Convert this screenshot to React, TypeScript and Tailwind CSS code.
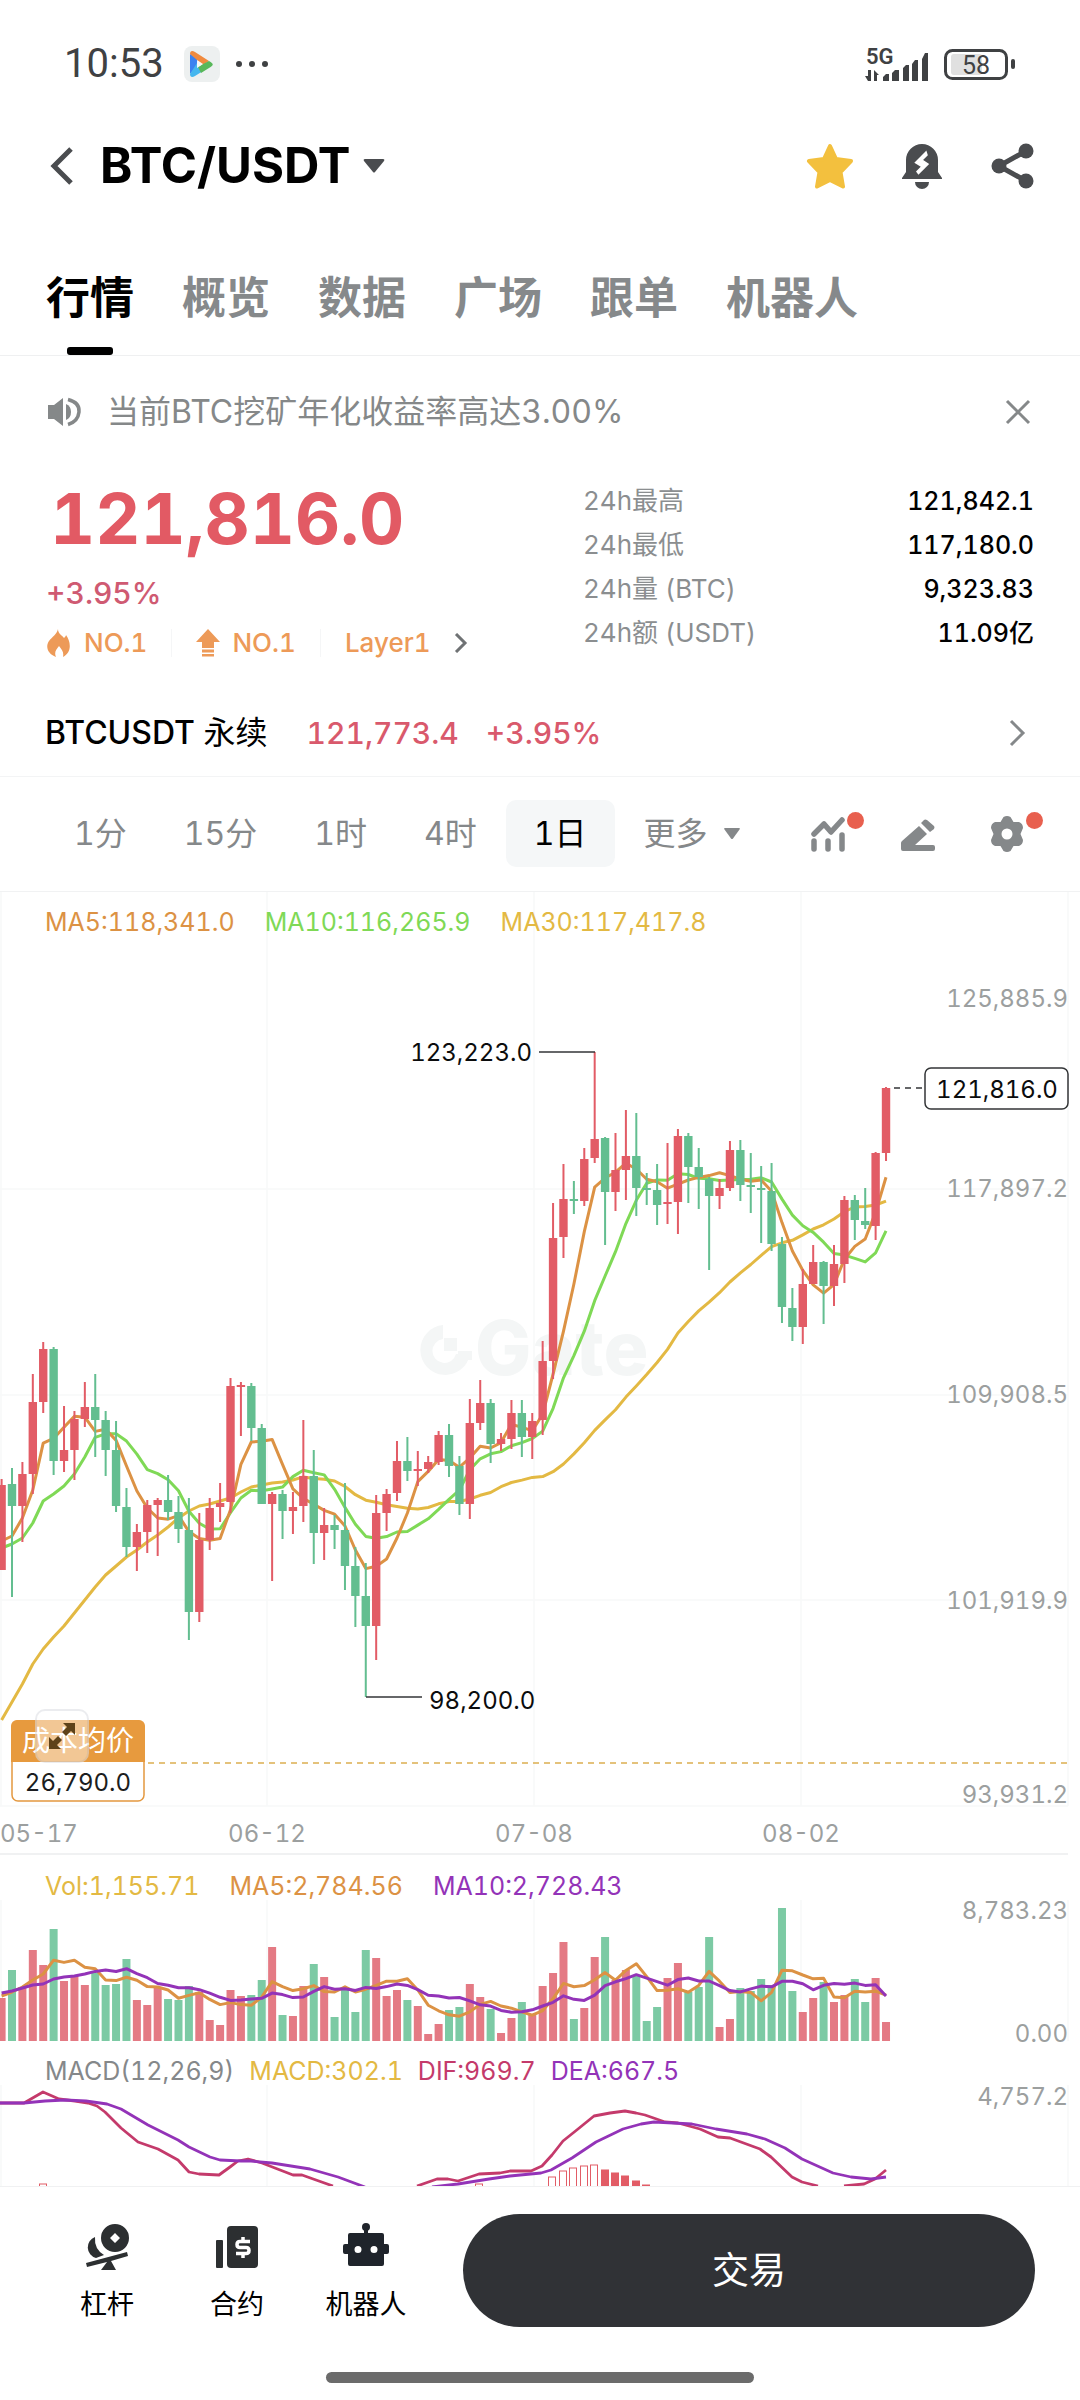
import React from "react";

type Candle = [dir: "u" | "d", high: number, top: number, bottom: number, low: number];

const UP = "#e25c66";
const DOWN = "#63be90";
const ORANGE = "#dc9244";
const GREEN = "#7fd956";
const YELLOW = "#e3b943";
const PURPLE = "#9333b8";
const PINK = "#c43a6b";

const candles: Candle[] = [
  ["u", 1479, 1485, 1570, 1570], ["d", 1468, 1484, 1506, 1597], ["u", 1462, 1474, 1506, 1542],
  ["u", 1374, 1402, 1474, 1494], ["u", 1342, 1349, 1402, 1413], ["d", 1347, 1349, 1461, 1475],
  ["u", 1406, 1450, 1461, 1472], ["u", 1411, 1419, 1450, 1480], ["u", 1382, 1407, 1419, 1427],
  ["d", 1374, 1407, 1420, 1457], ["d", 1411, 1420, 1450, 1476], ["d", 1421, 1450, 1506, 1512],
  ["d", 1488, 1507, 1547, 1557], ["u", 1524, 1532, 1547, 1571], ["u", 1500, 1505, 1532, 1553],
  ["u", 1498, 1500, 1505, 1556], ["d", 1475, 1500, 1512, 1520], ["d", 1496, 1512, 1529, 1543],
  ["d", 1498, 1530, 1612, 1640], ["u", 1513, 1540, 1612, 1622], ["u", 1498, 1508, 1540, 1550],
  ["u", 1483, 1503, 1507, 1522], ["u", 1378, 1386, 1502, 1513], ["u", 1382, 1385, 1387, 1436],
  ["d", 1383, 1386, 1428, 1441], ["d", 1424, 1428, 1504, 1504], ["u", 1492, 1494, 1504, 1581],
  ["d", 1490, 1494, 1511, 1539], ["u", 1492, 1507, 1511, 1534], ["u", 1420, 1476, 1506, 1522],
  ["d", 1450, 1476, 1533, 1564], ["u", 1508, 1525, 1533, 1560], ["d", 1515, 1525, 1530, 1549],
  ["d", 1483, 1530, 1566, 1590], ["d", 1547, 1566, 1596, 1627], ["d", 1563, 1596, 1626, 1697],
  ["u", 1495, 1513, 1626, 1660], ["u", 1489, 1494, 1513, 1531], ["u", 1441, 1461, 1493, 1501],
  ["d", 1437, 1461, 1471, 1481], ["u", 1451, 1469, 1471, 1486], ["u", 1456, 1462, 1469, 1473],
  ["u", 1431, 1435, 1462, 1465], ["d", 1424, 1435, 1466, 1477], ["d", 1456, 1466, 1504, 1515],
  ["u", 1399, 1423, 1504, 1519], ["u", 1380, 1403, 1423, 1430], ["d", 1399, 1403, 1444, 1463],
  ["u", 1433, 1439, 1444, 1451], ["u", 1400, 1413, 1439, 1449], ["d", 1400, 1413, 1437, 1457],
  ["u", 1413, 1421, 1437, 1459], ["u", 1341, 1361, 1420, 1435], ["u", 1203, 1238, 1361, 1379],
  ["u", 1164, 1199, 1237, 1258], ["d", 1181, 1199, 1201, 1214], ["u", 1148, 1159, 1201, 1206],
  ["u", 1052, 1139, 1158, 1163], ["d", 1137, 1138, 1192, 1245], ["u", 1133, 1170, 1192, 1211],
  ["u", 1110, 1156, 1170, 1200], ["d", 1113, 1156, 1188, 1216], ["d", 1173, 1188, 1190, 1205],
  ["d", 1164, 1190, 1205, 1225], ["u", 1143, 1202, 1204, 1224], ["u", 1129, 1136, 1202, 1234],
  ["d", 1133, 1136, 1167, 1203], ["d", 1148, 1167, 1177, 1209], ["d", 1177, 1179, 1196, 1270],
  ["u", 1179, 1188, 1196, 1209], ["u", 1141, 1150, 1188, 1191], ["d", 1140, 1150, 1185, 1201],
  ["d", 1153, 1185, 1187, 1213], ["d", 1166, 1188, 1190, 1243], ["d", 1163, 1191, 1244, 1251],
  ["d", 1237, 1244, 1307, 1323], ["d", 1288, 1308, 1327, 1341], ["u", 1269, 1284, 1327, 1344],
  ["u", 1245, 1262, 1284, 1284], ["d", 1261, 1262, 1286, 1324], ["u", 1245, 1264, 1286, 1306],
  ["u", 1196, 1200, 1264, 1283], ["d", 1195, 1200, 1220, 1240], ["d", 1188, 1221, 1225, 1229],
  ["u", 1152, 1153, 1226, 1240], ["u", 1087, 1088, 1153, 1161],
];

const volumes = [
  43, 71, 54, 91, 76, 112, 60, 65, 56, 68, 56, 57, 82, 41, 36, 54, 42, 41, 55, 49, 21, 16, 51, 45, 46, 61, 94, 26, 25,
  55, 77, 64, 24, 51, 29, 91, 83, 45, 51, 41, 35, 7, 17, 31, 34, 57, 44, 32, 8, 23, 39, 27, 55, 68, 99, 22, 33, 84,
  104, 61, 71, 66, 20, 34, 63, 78, 49, 54, 104, 14, 22, 53, 50, 62, 56, 133, 50, 29, 43, 59, 39, 46, 62, 39, 63, 19,
];

const VOLUME_BASE = 2041;
const candleX = (i: number) => 1.6 + i * 10.405;

/** Rolling mean of a series; the first points come from history before the window. */
function movingAverage(series: number[], span: number, lead: number[]): string {
  return series
    .map((_, i) => {
      const value =
        i < span - 1 ? lead[i] : series.slice(i - span + 1, i + 1).reduce((a, b) => a + b, 0) / span;
      return `${candleX(i).toFixed(1)},${value.toFixed(1)}`;
    })
    .join(" ");
}

const closes = candles.map(([dir, , top, bottom]) => (dir === "u" ? top : bottom));
const volumeTops = volumes.map((v) => VOLUME_BASE - v);

const ma5 = movingAverage(closes, 5, [1541, 1536, 1518, 1490]);
const ma10 = movingAverage(closes, 10, [1548, 1544, 1538, 1523, 1501, 1494, 1486, 1474, 1457]);
const ma30 = movingAverage(closes, 30, [
  1720, 1702, 1684, 1664, 1649, 1637, 1626, 1613, 1600, 1587, 1575, 1566, 1557, 1550, 1542, 1535, 1527, 1518, 1511,
  1506, 1504, 1501, 1498, 1492, 1487, 1485, 1483, 1482, 1480,
]);
const volMa5 = movingAverage(volumeTops, 5, [1996, 1992, 1987, 1980]);
const volMa10 = movingAverage(volumeTops, 10, [1993, 1991, 1988, 1985, 1984, 1979, 1977, 1976, 1974]);

const gridX = [1, 267, 534, 801, 1068];

function Grid({ from, to }: { from: number; to: number }) {
  return (
    <g stroke="#f7f8f9" strokeWidth={1.5}>
      {gridX.map((x) => (
        <line key={x} x1={x} x2={x} y1={from} y2={to} />
      ))}
    </g>
  );
}

function AxisLabel({ y, children }: { y: number; children: string }) {
  return (
    <text x={1068} y={y + 9} textAnchor="end" fontSize={24} fill="#9c9f9f">
      {children}
    </text>
  );
}

function PriceChart() {
  return (
    <section aria-label="K线" className="relative">
      <div className="absolute top-[14px] left-[45px] flex gap-[30px] text-[25px] leading-8">
        <span className="text-[#dc9244]">MA5:118,341.0</span>
        <span className="text-[#7fd956]">MA10:116,265.9</span>
        <span className="text-[#e3b943]">MA30:117,417.8</span>
      </div>
      <svg viewBox="0 892 1080 963" className="block w-full tabular-nums">
        <Grid from={892} to={1806} />
        <g stroke="#f7f8f9" strokeWidth={1.5}>
          {[1189, 1395, 1600, 1806].map((y) => (
            <line key={y} x1={0} x2={1068} y1={y} y2={y} />
          ))}
        </g>
        <line x1={0} x2={1068} y1={1854} y2={1854} stroke="#ebedee" strokeWidth={1.5} />

        <g fill="#f4f6f6">
          <path d="M443 1325a25 25 0 1 0 27 29h-14a12 12 0 1 1-13-15z" />
          <path d="M444 1338h13v13h-13zM458 1351h14v9h-14z" />
          <text x={475} y={1375} fontSize={75} fontWeight={800}>
            Gate
          </text>
        </g>

        <g fill="none" strokeWidth={3} strokeLinejoin="round">
          <polyline points={ma30} stroke={YELLOW} />
          <polyline points={ma10} stroke={GREEN} />
          <polyline points={ma5} stroke={ORANGE} />
        </g>
        {candles.map(([dir, high, top, bottom, low], i) => (
          <g key={i} fill={dir === "u" ? UP : DOWN}>
            <rect x={candleX(i) - 1} y={high} width={2} height={low - high} />
            <rect x={candleX(i) - 4.2} y={top} width={8.4} height={Math.max(bottom - top, 2)} />
          </g>
        ))}

        <g stroke="#333537" strokeWidth={1.5} fill="none">
          <path d="M539 1052H595" />
          <path d="M366 1697H422" />
          <path d="M894 1088H923" strokeDasharray="6 5" />
          <rect x={925} y={1068} width={143} height={41} rx={6} fill="#fff" />
        </g>
        <g fontSize={24} fill="#0b0c0d">
          <text x={532} y={1061} textAnchor="end">123,223.0</text>
          <text x={429} y={1709}>98,200.0</text>
          <text x={997} y={1098} textAnchor="middle">121,816.0</text>
        </g>

        <line x1={148} x2={1068} y1={1763} y2={1763} stroke="#dcae50" strokeWidth={1.5} strokeDasharray="6 5" />
        <rect x={12} y={1721} width={132} height={80} rx={6} fill="#fff" stroke="#e4983f" strokeWidth={1.5} />
        <path d="M11 1762v-36a6 6 0 0 1 6-6h122a6 6 0 0 1 6 6v36z" fill="#e79a3e" />
        <text x={78} y={1751} textAnchor="middle" fontSize={28} fill="#fff">
          成本均价
        </text>
        <text x={78} y={1791} textAnchor="middle" fontSize={24} fill="#1b1d20">
          26,790.0
        </text>

        <AxisLabel y={998}>125,885.9</AxisLabel>
        <AxisLabel y={1188}>117,897.2</AxisLabel>
        <AxisLabel y={1394}>109,908.5</AxisLabel>
        <AxisLabel y={1600}>101,919.9</AxisLabel>
        <AxisLabel y={1794}>93,931.2</AxisLabel>
        <g fontSize={24} fill="#9c9f9f">
          <text x={0} y={1842}>05-17</text>
          <text x={267} y={1842} textAnchor="middle">06-12</text>
          <text x={534} y={1842} textAnchor="middle">07-08</text>
          <text x={801} y={1842} textAnchor="middle">08-02</text>
        </g>
      </svg>
      <button
        type="button"
        aria-label="全屏"
        className="absolute bottom-[92px] left-[35px] flex size-[54px] items-center justify-center rounded-[10px] border-2 border-gray-400/20 bg-white/45"
      >
        <svg viewBox="0 0 28 28" className="size-[28px]" fill="#5e4219">
          <path d="M15 1h12v12l-4-4-5 5-4-4 5-5zM1 27V15l4 4 5-5 4 4-5 5 4 4z" />
        </svg>
      </button>
    </section>
  );
}

function VolumeChart() {
  return (
    <section aria-label="成交量" className="relative">
      <div className="absolute top-[15px] left-[45px] flex gap-[30px] text-[25px] leading-8">
        <span className="text-[#e3b943]">Vol:1,155.71</span>
        <span className="text-[#dc9244]">MA5:2,784.56</span>
        <span className="text-[#9333b8]">MA10:2,728.43</span>
      </div>
      <svg viewBox="0 1855 1080 194" className="block w-full tabular-nums">
        <Grid from={1900} to={2041} />
        {volumes.map((v, i) => (
          <rect
            key={i}
            x={candleX(i) - 4}
            y={VOLUME_BASE - v}
            width={8}
            height={v}
            fill={candles[i][0] === "u" ? "#e47a84" : "#7ccaa4"}
          />
        ))}
        <g fill="none" strokeWidth={3} strokeLinejoin="round">
          <polyline points={volMa5} stroke={ORANGE} />
          <polyline points={volMa10} stroke={PURPLE} />
        </g>
        <AxisLabel y={1910}>8,783.23</AxisLabel>
        <AxisLabel y={2033}>0.00</AxisLabel>
      </svg>
    </section>
  );
}

const histogram: [x: number, top: number, solid: boolean][] = [
  [43, 2184, false], [479, 2184, false], [552, 2177, false], [563, 2171, false], [573, 2168, false],
  [584, 2166, false], [594, 2165, false], [605, 2170, true], [615, 2173, true], [625, 2176, true],
  [636, 2181, true], [646, 2185, true],
];

function MacdChart() {
  return (
    <section aria-label="MACD" className="relative">
      <div className="absolute top-[6px] left-[45px] flex gap-[15px] text-[25px] leading-8">
        <span className="text-[#85888a]">MACD(12,26,9)</span>
        <span className="text-[#e3b943]">MACD:302.1</span>
        <span className="text-[#c43a6b]">DIF:969.7</span>
        <span className="text-[#9333b8]">DEA:667.5</span>
      </div>
      <svg viewBox="0 2049 1080 137" className="block w-full tabular-nums">
        <Grid from={2085} to={2186} />
        {histogram.map(([x, top, solid]) => (
          <rect
            key={x}
            x={x - 3.5}
            y={top}
            width={7}
            height={40}
            fill={solid ? UP : "#fff"}
            stroke={UP}
            strokeWidth={1}
          />
        ))}
        <g fill="none" strokeWidth={2.8} strokeLinejoin="round">
          <path
            stroke={PINK}
            d="M0 2103L24 2103 43 2092 59 2099 75 2101 88 2103 97 2106 105 2112 121 2128 138 2142 158 2149 178 2160 189 2172 199 2174 219 2175 230 2167 238 2161 248 2159 262 2163 293 2175 302 2175 316 2180 333 2186M417 2186L437 2179 448 2179 458 2181 479 2174 500 2173 510 2171 531 2171 542 2166 552 2155 563 2141 578 2129 594 2116 610 2113 625 2111 636 2113 645 2115 665 2122 678 2123 700 2129 718 2137 730 2138 760 2149 771 2157 792 2177 802 2182 818 2186M844 2186L864 2184 875 2179 886 2170"
          />
          <path
            stroke={PURPLE}
            d="M0 2103L24 2103 45 2101 65 2100 86 2101 107 2104 121 2109 148 2125 178 2140 189 2147 210 2157 220 2160 241 2161 251 2161 272 2163 310 2169 338 2177 365 2187M432 2187L458 2184 489 2179 510 2176 541 2173 551 2170 572 2158 596 2142 623 2129 641 2124 654 2122 692 2124 716 2129 747 2134 765 2139 785 2148 802 2159 833 2173 851 2177 871 2179 886 2177"
          />
        </g>
        <AxisLabel y={2096}>4,757.2</AxisLabel>
      </svg>
    </section>
  );
}

function StatusBar() {
  return (
    <div className="flex items-center justify-between px-16 py-[43px] text-[#3f4143]">
      <div className="flex items-center">
        <time className="font-['Roboto',sans-serif] text-[40px] leading-[42px]">10:53</time>
        <svg viewBox="0 0 36 36" className="ml-[20px] size-9">
          <rect width="36" height="36" rx="8" fill="#edf0f0" />
          <path d="M6 8v20l8-9V13z" fill="#3c82f0" />
          <path d="M6 28c0 3 2 4 5 2l8-5-6-8z" fill="#45b6ee" />
          <path d="M6 8c0-3 2-4 5-2l14 9-6 4z" fill="#f08a3e" />
          <path d="M25 15c5 3 5 4 0 7l-8 5-3-6 5-3z" fill="#58b85a" />
          <path d="M13 14v8l6-4z" fill="#f4f7f7" />
        </svg>
        <svg viewBox="0 0 34 8" className="ml-[15px] h-2 w-[34px]" fill="currentColor">
          <circle cx="4" cy="4" r="3" />
          <circle cx="17" cy="4" r="3" />
          <circle cx="30" cy="4" r="3" />
        </svg>
      </div>
      <div className="flex items-center gap-[14px]">
        <svg viewBox="866 42 65 38" className="h-[38px] w-[65px]" fill="currentColor">
          <text x="868" y="61" fontSize="22" fontWeight="600" fontFamily="Roboto, sans-serif">5G</text>
          <path d="M873 67v11h-3l-3-5h3v-6zM876 67l5 5h-2v6h-3z" />
          <path d="M885 78v-4l3-3h3v7zM894 78v-8l3-3h4v11zM905 78v-13l3-3h3v16zM914 78v-17l3-4h3v21zM924 78v-22l3-6h3v28z" />
        </svg>
        <svg viewBox="943 46 73 34" className="h-[34px] w-[73px]">
          <rect x="951" y="53" width="31" height="21" rx="3" fill="#e0e0e0" />
          <rect x="945.500" y="49.500" width="61" height="28" rx="7" fill="none" stroke="currentColor" strokeWidth="3" />
          <rect x="1011" y="58" width="4" height="10" rx="2" fill="currentColor" />
          <text x="976" y="73" fontSize="25" textAnchor="middle" fill="currentColor" fontFamily="Roboto, sans-serif">58</text>
        </svg>
      </div>
    </div>
  );
}

function Header() {
  return (
    <header className="flex items-center px-[46px] py-3 text-[#4a4c4f]">
      <button type="button" aria-label="返回" className="mr-[26px]">
        <svg viewBox="0 0 28 40" className="h-10 w-7" fill="none" stroke="currentColor" strokeWidth="5">
          <path d="M25 3L8 20l17 17" />
        </svg>
      </button>
      <button type="button" className="flex items-center gap-3">
        <h1 className="text-[49px] leading-[52px] font-bold text-black">BTC/USDT</h1>
        <svg viewBox="0 0 22 14" className="h-[14px] w-[22px]" fill="currentColor">
          <path d="M2 0h18q2 0 1 2l-9 11q-1 1-2 0L1 2Q0 0 2 0z" />
        </svg>
      </button>
      <div className="ml-auto flex items-center gap-[47px]">
        <button type="button" aria-label="收藏">
          <svg viewBox="0 0 48 46" className="h-[46px] w-12">
            <path
              d="M24 3l6 13 15 2-10.500 11 2.500 14.500L24 37l-13 6.500L13.500 29 3 18l15-2z"
              fill="#f3c03e"
              stroke="#f3c03e"
              strokeWidth="4"
              strokeLinejoin="round"
            />
          </svg>
        </button>
        <button type="button" aria-label="价格提醒">
          <svg viewBox="0 0 42 46" className="h-[46px] w-[42px]" fill="currentColor">
            <path d="M5 17a16 16 0 0 1 32 0v12l4 6v1H1v-1l4-6z" />
            <path d="M14 39h14a7 7 0 0 1-14 0z" />
            <path d="M25 9L14.500 19.500l6.500 4-5 5 1.500 2L27 21l-6-4 5-5z" fill="#fff" stroke="#fff" strokeWidth="1.500" />
          </svg>
        </button>
        <button type="button" aria-label="分享">
          <svg viewBox="0 0 44 46" className="h-[46px] w-11" fill="currentColor">
            <path d="M36 8L9 23l27 15" fill="none" stroke="currentColor" strokeWidth="5" />
            <circle cx="36" cy="8" r="7.500" />
            <circle cx="9" cy="23" r="7.500" />
            <circle cx="36" cy="38" r="7.500" />
          </svg>
        </button>
      </div>
    </header>
  );
}

function Tabs() {
  const tabs = ["行情", "概览", "数据", "广场", "跟单", "机器人"];
  return (
    <nav className="flex gap-12 border-b border-[#eff0f1] px-[46px] pt-[71px] text-[44px] leading-[46px] font-bold">
      {tabs.map((tab, i) => (
        <a
          key={tab}
          href={`#tab-${i}`}
          className={i === 0 ? "flex flex-col items-center text-black" : "text-[#86898b]"}
        >
          {tab}
          {i === 0 && <span className="mt-[26px] h-2 w-[46px] rounded-[3px] bg-black" />}
        </a>
      ))}
    </nav>
  );
}

function Notice() {
  return (
    <div className="flex items-center px-[46px] pt-9 text-[#858889]">
      <svg viewBox="0 0 36 30" className="h-[30px] w-9" fill="currentColor">
        <path d="M2 8h6l9-7v28l-9-7H2z" />
        <path d="M20 7v16q5-2 5-8t-5-8z" />
        <path d="M22 2.500q12 3 11 12.500T22 27.500" fill="none" stroke="currentColor" strokeWidth="3.500" />
      </svg>
      <p className="ml-[25px] text-[32px] leading-10">当前BTC挖矿年化收益率高达3.00%</p>
      <button type="button" aria-label="关闭" className="ml-auto">
        <svg viewBox="0 0 32 32" className="size-8" fill="none" stroke="currentColor" strokeWidth="3">
          <path d="M5 5l22 22M27 5L5 27" />
        </svg>
      </button>
    </div>
  );
}

const stats = [
  ["24h最高", "121,842.1"],
  ["24h最低", "117,180.0"],
  ["24h量 (BTC)", "9,323.83"],
  ["24h额 (USDT)", "11.09亿"],
];

function Summary() {
  return (
    <section className="flex justify-between px-[46px] pt-[47px]">
      <div>
        <p className="ml-1 text-[70px] leading-[80px] font-bold text-[#e25a64]">121,816.0</p>
        <p className="mt-4 text-[30px] leading-9 font-medium text-[#cf5a72]">+3.95%</p>
        <div className="mt-4 flex items-center text-[26px] leading-8 font-medium text-[#ed9a58]">
          <a href="#hot" className="flex items-center gap-3">
            <svg viewBox="0 0 26 28" className="h-7 w-[26px]" fill="currentColor">
              <path d="M12 0c0 5 4 6 6 9 1-1 2-2 2-3 5 7 6 17-3 22 1-5-1-7-4-11-3 4-5 6-3 11C2 25-1 18 3 12 6 8 11 5 12 0z" />
            </svg>
            NO.1
          </a>
          <span className="mx-6 h-7 w-px bg-[#f5f6f7]" />
          <a href="#rise" className="flex items-center gap-3">
            <svg viewBox="0 0 24 28" className="h-7 w-6" fill="currentColor">
              <path d="M12 0l12 13h-6v6H6v-6H0zM6 20.500h12v3H6zM6 25h12v2.500H6z" />
            </svg>
            NO.1
          </a>
          <span className="mx-6 h-7 w-px bg-[#f5f6f7]" />
          <a href="#layer1" className="flex items-center gap-[22px]">
            Layer1
            <svg viewBox="0 0 16 20" className="h-5 w-4" fill="none" stroke="#6f7274" strokeWidth="3">
              <path d="M3 1l9 9-9 9" />
            </svg>
          </a>
        </div>
      </div>
      <table className="w-[451px] self-start text-[26px] leading-11">
        <tbody>
          {stats.map(([label, value]) => (
            <tr key={label}>
              <th scope="row" className="p-0 text-left font-normal text-[#8b8e90]">
                {label}
              </th>
              <td className="p-0 text-right text-[25px] font-medium text-black">{value}</td>
            </tr>
          ))}
        </tbody>
      </table>
    </section>
  );
}

function Perpetual() {
  return (
    <a
      href="#perpetual"
      className="flex items-center border-b border-[#f3f4f5] px-[45px] pt-[54px] pb-[23px] text-[30px] leading-10 font-medium"
    >
      <span className="text-[32px] text-black">
        BTCUSDT <span className="font-normal">永续</span>
      </span>
      <span className="ml-[39px] text-[#d9596c]">121,773.4</span>
      <span className="ml-[27px] text-[#d9596c]">+3.95%</span>
      <svg viewBox="0 0 26 28" className="ml-auto h-7 w-[26px]" fill="none" stroke="#85888a" strokeWidth="3">
        <path d="M2 2l12 12L2 26" />
      </svg>
    </a>
  );
}

function IntervalBar() {
  const intervals = ["1分", "15分", "1时", "4时", "1日"];
  return (
    <div className="flex items-center border-b border-[#f1f2f3] pt-[23px] pr-[55px] pb-6 pl-[46px] text-[32px] leading-[67px] text-[#85888a]">
      <div className="flex gap-px">
        {intervals.map((label) => (
          <button
            key={label}
            type="button"
            aria-pressed={label === "1日"}
            className={label === "1日" ? "rounded-[10px] bg-[#f5f7f8] px-7 text-black" : "px-7"}
          >
            {label}
          </button>
        ))}
      </div>
      <button type="button" className="flex items-center gap-4 pl-[29px]">
        更多
        <svg viewBox="0 0 16 11" className="h-[11px] w-4" fill="currentColor">
          <path d="M1 0h14q1.500 0 .5 1.500l-6.500 9q-1 1-2 0L.5 1.500Q-.5 0 1 0z" />
        </svg>
      </button>
      <div className="ml-auto flex items-center gap-[53px]">
        <button type="button" aria-label="指标" className="relative">
          <svg viewBox="0 0 36 38" className="h-[38px] w-9" fill="none" stroke="currentColor" strokeWidth="5.500">
            <path d="M3 19L13 9l7 8L31 5" strokeLinecap="round" strokeLinejoin="round" />
            <path d="M3 26v8M17 26v8M31 20v14" strokeLinecap="round" />
          </svg>
          <span className="absolute -top-[3px] -right-[17px] size-[17px] rounded-full bg-[#e8604f]" />
        </button>
        <button type="button" aria-label="画图">
          <svg viewBox="0 0 36 38" className="h-[38px] w-9" fill="currentColor">
            <path d="M19 11l8 8-12 11h18q2 0 2 2v2q0 2-2 2H3q-2 0-2-2v-6q0-1 1-2zM21 8l3-3q1-1 3 0l7 6q1 1 0 3l-4 3z" />
          </svg>
        </button>
        <button type="button" aria-label="设置" className="relative">
          <svg viewBox="0 0 36 38" className="h-[38px] w-9" fill="currentColor">
            <path
              fillRule="evenodd"
              d="M14.500 2q3.500-2 7 0l3 5 5.500 0q4 1.500 4 6L31.500 19 34 25q0 4.500-4 6l-5.500 0-3 5q-3.500 2-7 0l-3-5L6 31q-4-1.500-4-6l2.500-6L2 13q0-4.500 4-6l5.500 0zM18 13.500a5.500 5.500 0 1 0 0 11 5.500 5.500 0 0 0 0-11z"
            />
          </svg>
          <span className="absolute -top-[3px] -right-[18px] size-[17px] rounded-full bg-[#e8604f]" />
        </button>
      </div>
    </div>
  );
}

function BottomBar() {
  return (
    <footer className="border-t border-[#f0f1f2] pt-[27px] pb-[17px]">
      <div className="flex items-center pr-[45px] pl-[46px]">
        <div className="flex pt-1 text-[27px] leading-9 text-black">
          <button type="button" className="flex w-[122px] flex-col items-center gap-4">
            <svg viewBox="0 0 46 48" className="h-12 w-[46px]" fill="#2c2f31">
              <path d="M11 14a11 11 0 0 0 1 21l8-3Q10 26 11 14z" />
              <path
                fillRule="evenodd"
                d="M31 1a14 14 0 1 0 0 28 14 14 0 0 0 0-28zm0 9l5 5-5 5-5-5z"
              />
              <path d="M2 40l41-11 1 4-17 5 5 9H17l6-8-20 5z" />
            </svg>
            杠杆
          </button>
          <button type="button" className="flex w-[138px] flex-col items-center gap-4">
            <svg viewBox="0 0 44 48" className="h-12 w-11">
              <rect x="1" y="17" width="7" height="28" rx="1" fill="#2c2f31" />
              <rect x="12" y="3" width="31" height="42" rx="4" fill="#2c2f31" />
              <path
                d="M35 18.500H25q-3 0-3 3t3 3h6q3 0 3 3t-3 3H21M28 14v4M28 31v4"
                fill="none"
                stroke="#fff"
                strokeWidth="3.500"
              />
            </svg>
            合约
          </button>
          <button type="button" className="flex w-[120px] flex-col items-center gap-4">
            <svg viewBox="0 0 48 48" className="size-12" fill="#1f242b">
              <circle cx="24" cy="4" r="4" />
              <path d="M22 5h4v6h-4z" />
              <path
                fillRule="evenodd"
                d="M8 10h32q2 0 2 2v9h3q2 0 2 2v6q0 2-2 2h-3v10q0 2-2 2H8q-2 0-2-2V31H3q-2 0-2-2v-6q0-2 2-2h3v-9q0-2 2-2zm8 13a3.500 3.500 0 1 0 0 7 3.500 3.500 0 0 0 0-7zm16 0a3.500 3.500 0 1 0 0 7 3.500 3.500 0 0 0 0-7z"
              />
            </svg>
            机器人
          </button>
        </div>
        <button
          type="button"
          className="ml-[37px] flex-1 rounded-full bg-[#303236] text-[37px] leading-[113px] text-white"
        >
          交易
        </button>
      </div>
      <div className="mx-auto mt-[45px] h-[11px] w-[428px] rounded-full bg-[#6b6b6b]" />
    </footer>
  );
}

export default function App() {
  return (
    <main className="w-full overflow-hidden bg-white font-['Inter','Noto_Sans_CJK_SC',sans-serif] tabular-nums">
      <StatusBar />
      <Header />
      <Tabs />
      <Notice />
      <Summary />
      <Perpetual />
      <IntervalBar />
      <PriceChart />
      <VolumeChart />
      <MacdChart />
      <BottomBar />
    </main>
  );
}
